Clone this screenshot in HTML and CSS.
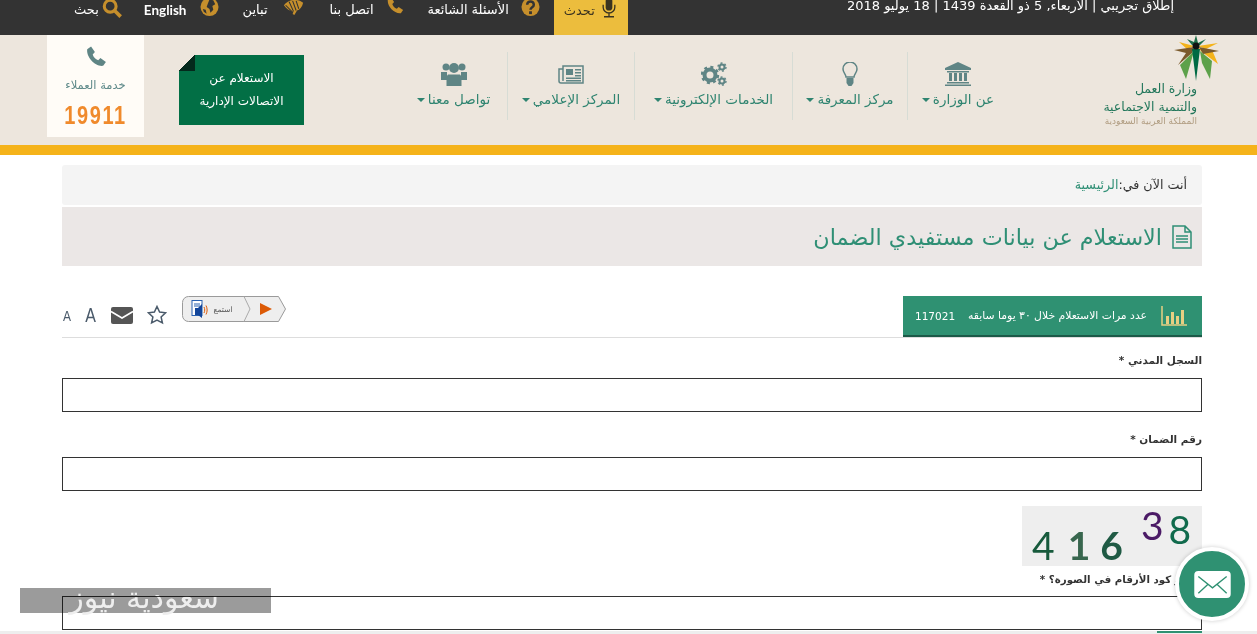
FILE: index.html
```html
<!DOCTYPE html>
<html lang="ar" dir="rtl">
<head>
    <meta charset="UTF-8">
    <title>الاستعلام عن بيانات مستفيدي الضمان</title>
    <link rel="stylesheet" href="styles.css">
</head>
<body>
    <div class="topbar">
        <div class="topbar-date">إطلاق تجريبي | الأربعاء, 5 ذو القعدة 1439 | 18 يوليو 2018</div>
        <div class="topbar-links">
            <a class="talk-link">
                <svg class="top-icon" viewBox="0 0 20 24"><path fill="#3a3320" d="M10 0a4 4 0 0 0-4 4v7a4 4 0 0 0 8 0V4a4 4 0 0 0-4-4z"/><path fill="none" stroke="#3a3320" stroke-width="1.6" d="M3 8v3a7 7 0 0 0 14 0V8M10 18v4M4 22.500h12"/></svg>
                <span>تحدث</span>
            </a>
            <a class="top-link link-faq">
                <svg class="top-icon" viewBox="0 0 20 20"><circle cx="10" cy="10" r="9.500" fill="#c68f2c"/><path fill="none" stroke="#333" stroke-width="2.600" d="M6.500 7.500c0-4.500 7-4.500 7 0 0 3-3.500 2.500-3.500 5.500"/><rect x="8.500" y="14.500" width="3" height="3" fill="#333"/></svg>
                <span>الأسئلة الشائعة</span>
            </a>
            <a class="top-link link-call">
                <svg class="top-icon raised" viewBox="0 0 20 20"><path fill="#c68f2c" d="M2 3l3.500-2.500 3.500 5-2 2.200c.8 2.500 2.500 4.300 5 5.300l2-2 5 3.500-2.500 3.500C9 19 1 10 2 3z"/></svg>
                <span>اتصل بنا</span>
            </a>
            <a class="top-link link-contrast">
                <svg class="top-icon" viewBox="0 0 24 20"><path fill="#c68f2c" d="M1 8c5-7 15-8 22-3-1 5-4 8-7 9l-3 5-2-1 1-3C8 15 4 12 1 8z"/><path fill="none" stroke="#333" stroke-width="1.200" d="M7 4l5 11M11 3l4 11M15 3l3 9M3 8l7 7"/></svg>
                <span>تباين</span>
            </a>
            <a class="top-link link-lang">
                <svg class="top-icon" viewBox="0 0 20 20"><circle cx="10" cy="10" r="9.500" fill="#c68f2c"/><path fill="#333" d="M10 2l4 1 2 4-3 2 1 4-3 3-1-4-3-2 1-3zM3 12l3 1 1 4-3-2z"/></svg>
                <span class="lang-text">English</span>
            </a>
            <a class="top-link link-search">
                <svg class="top-icon search-icon" viewBox="0 0 22 22"><circle cx="9" cy="9" r="6.500" fill="none" stroke="#c68f2c" stroke-width="3.400"/><path stroke="#c68f2c" stroke-width="4" d="M13.500 13.500l7 7"/></svg>
                <span>بحث</span>
            </a>
        </div>
    </div>

    <div class="header">
        <div class="logo">
            <svg class="logo-palm" viewBox="0 0 46 46">
                <path fill="#f4b31a" d="M24 11L44 8 32 14zM24 13l14 2 6 14-16-12zM20 11L5 7l8 7z"/>
                <path fill="#7b5a2c" d="M20 12L0 15l12 3-8 12 14-12zM25 12l20 4-16 3z"/>
                <path fill="#5da14a" d="M20 16L12 44 6 30zM26 16l12 10-2 18-8-16z"/>
                <path fill="#006a44" d="M18 14h8l-4 32z"/>
                <path fill="#1f6f4b" d="M22 0l2 8 8-4-6 6h-8l-5-6 7 3z"/>
                <circle cx="22" cy="11" r="3.500" fill="#111"/>
            </svg>
            <div class="logo-name">وزارة العمل<br>والتنمية الاجتماعية</div>
            <div class="logo-sub">المملكة العربية السعودية</div>
        </div>
        <nav class="mainnav">
            <a class="nav-item nav-ministry">
                <svg class="nav-icon" viewBox="0 0 26 24"><path fill="#5f8585" d="M13 0l13 6v2H0V6zM2 9h22v1.500H2zM4 11h3v8H4zM9 11h3v8H9zM14 11h3v8h-3zM19 11h3v8h-3zM2 20h22v1.500H2zM0 22.500h26V24H0z"/></svg>
                <span class="nav-label">عن الوزارة<i class="caret"></i></span>
            </a>
            <a class="nav-item nav-knowledge">
                <svg class="nav-icon" viewBox="0 0 26 24"><path fill="none" stroke="#5f8585" stroke-width="1.500" d="M9 15c0-3-3-4-3-8a7 7 0 0 1 14 0c0 4-3 5-3 8z"/><path fill="#5f8585" d="M9.500 16h7v5l-2 3h-3l-2-3z"/></svg>
                <span class="nav-label">مركز المعرفة<i class="caret"></i></span>
            </a>
            <a class="nav-item nav-services">
                <svg class="nav-icon" viewBox="0 0 26 24"><circle cx="9" cy="13" r="5.500" fill="none" stroke="#5f8585" stroke-width="4"/><circle cx="9" cy="13" r="8" fill="none" stroke="#5f8585" stroke-width="2.400" stroke-dasharray="3 3.300"/><circle cx="21" cy="5" r="2.500" fill="none" stroke="#5f8585" stroke-width="2"/><circle cx="21" cy="5" r="4" fill="none" stroke="#5f8585" stroke-width="1.400" stroke-dasharray="2 2.200"/><circle cx="21" cy="19" r="2.500" fill="none" stroke="#5f8585" stroke-width="2"/><circle cx="21" cy="19" r="4" fill="none" stroke="#5f8585" stroke-width="1.400" stroke-dasharray="2 2.200"/></svg>
                <span class="nav-label">الخدمات الإلكترونية<i class="caret"></i></span>
            </a>
            <a class="nav-item nav-media">
                <svg class="nav-icon" viewBox="0 0 26 24"><path fill="none" stroke="#5f8585" stroke-width="1.500" d="M5 4h20v17H3a2 2 0 0 1-2-2V7h4zM5 7v12"/><path fill="#5f8585" d="M8 7h7v6H8zM17 7h6v1.500h-6zM17 10h6v1.500h-6zM17 13h6v1.500h-6zM8 15.500h15V17H8zM8 18h15v1.500H8z"/></svg>
                <span class="nav-label">المركز الإعلامي<i class="caret"></i></span>
            </a>
            <a class="nav-item nav-contact">
                <svg class="nav-icon" viewBox="0 0 26 24"><circle cx="5" cy="5" r="3.500" fill="#5f8585"/><circle cx="21" cy="5" r="3.500" fill="#5f8585"/><circle cx="13" cy="6" r="5" fill="#5f8585"/><path fill="#5f8585" d="M0 10h6v8H0zM20 10h6v8h-6zM7 12.500h12l1.500 2V24H5.500v-9.500z"/></svg>
                <span class="nav-label">تواصل معنا<i class="caret"></i></span>
            </a>
        </nav>
        <a class="admin-box">
            <i class="admin-fold"></i>
            الاستعلام عن<br>الاتصالات الإدارية
        </a>
        <div class="service-box">
            <svg class="service-icon" viewBox="0 0 20 20"><path fill="#5f8585" d="M2 3l3.500-2.500 3.500 5-2 2.200c.8 2.500 2.500 4.300 5 5.300l2-2 5 3.500-2.500 3.500C9 19 1 10 2 3z"/></svg>
            <div class="service-label">خدمة العملاء</div>
            <div class="service-number">19911</div>
        </div>
    </div>
    <div class="stripe"></div>

    <div class="content">
        <div class="breadcrumb"><span class="crumb-lead">أنت الآن في:</span><a class="crumb-link">الرئيسية</a></div>
        <div class="page-title">
            <svg class="title-icon" viewBox="0 0 20 24"><path fill="none" stroke="#2f8f75" stroke-width="1.500" d="M1 1h12l6 6v16H1zM13 1v6h6"/><path stroke="#2f8f75" stroke-width="1.500" d="M4 11h12M4 14h12M4 17h12"/></svg>
            <h1>الاستعلام عن بيانات مستفيدي الضمان</h1>
        </div>

        <div class="tools-row">
            <div class="stats-box">
                <svg class="stats-icon" viewBox="0 0 26 20"><path fill="none" stroke="#e8cf82" stroke-width="1.500" d="M1 0v19h25"/><path fill="#e8cf82" d="M5 10h3v8H5zM10 6h3v12h-3zM15 10h3v8h-3zM20 4h3v14h-3z"/></svg>
                <span class="stats-text">عدد مرات الاستعلام خلال ٣٠ يوما سابقه</span>
                <span class="stats-count">117021</span>
            </div>
            <div class="page-tools">
                <svg class="listen" viewBox="0 0 104 26">
                    <path d="M6.500 0.500H96.500L103.500 13L96.500 25.500H6.500a6 6 0 0 1-6-6V6.500a6 6 0 0 1 6-6z" fill="#eeeeee" stroke="#9a9a9a"/>
                    <path fill="none" stroke="#aaa" d="M62 0.500l6 12.500-6 12.500"/>
                    <path fill="#dc5a06" d="M78 7l12 6-12 6z"/>
                    <rect x="10" y="4.500" width="10" height="15" fill="#fff" stroke="#2a62b0"/>
                    <path stroke="#2a62b0" d="M12 8h6M12 10h6"/>
                    <path fill="#12459a" d="M13 12h3l4-4v14l-4-3h-3z"/>
                    <path fill="none" stroke="#dc5a06" d="M22 11c1 2 1 4 0 6M24 9.500c1.500 3 1.500 6 0 9"/>
                    <text class="listen-text" x="41" y="16" text-anchor="middle">استمع</text>
                </svg>
                <svg class="star" viewBox="0 0 20 20"><path fill="none" stroke="#4a5a6a" stroke-width="1.500" d="M10 1.500l2.600 5.600 6 .7-4.500 4.100 1.300 6L10 15l-5.400 2.900 1.300-6L1.400 7.800l6-.7z"/></svg>
                <svg class="mail" viewBox="0 0 22 17"><rect width="22" height="17" rx="2" fill="#555"/><path fill="none" stroke="#fff" stroke-width="1.600" d="M0 4.500l11 6.500 11-6.500"/></svg>
                <span class="font-up">A</span>
                <span class="font-down">A</span>
            </div>
        </div>

        <form class="inquiry-form">
            <label class="field-label first-label">السجل المدني *</label>
            <div class="field-box"></div>
            <label class="field-label second-label">رقم الضمان *</label>
            <div class="field-box"></div>
            <div class="captcha" dir="ltr">
                <span class="digit digit-4">4</span>
                <span class="digit digit-1">1</span>
                <span class="digit digit-6">6</span>
                <span class="digit digit-3">3</span>
                <span class="digit digit-8">8</span>
            </div>
            <label class="field-label captcha-label">ما هو كود الأرقام في الصورة؟ *</label>
            <div class="field-box"></div>
        </form>
    </div>

    <div class="bottom-strip"><i class="bottom-mark"></i></div>

    <div class="watermark">سعودية نيوز</div>
    <a class="float-mail">
        <svg viewBox="0 0 54 40"><rect width="54" height="40" rx="6" fill="#fff"/><path fill="none" stroke="#2f9172" stroke-width="2" d="M6 8l21 17L48 8M6 33l14-13M48 33L34 20"/></svg>
    </a>
</body>
</html>
```
FILE: styles.css
```css
body, html {
    margin: 0;
    height: 634px;
    overflow: hidden;
    background: #fff;
    font-family: "DejaVu Sans", "Noto Sans", sans-serif;
    color: #333;
}

a {
    text-decoration: none;
    color: inherit;
}

/* top bar */
.topbar {
    height: 35px;
    background: #333;
    color: #fff;
    display: flex;
    justify-content: space-between;
    padding: 0 83px 0 74px;
    font-size: 13px;
}
.topbar-date {
    line-height: 11px;
    white-space: nowrap;
}
.topbar-links {
    display: flex;
    align-items: flex-start;
}
.talk-link {
    width: 74px;
    height: 35px;
    box-sizing: border-box;
    background: #ecbd3d;
    color: #3a3320;
    display: flex;
    justify-content: center;
    gap: 5px;
    line-height: 22px;
    margin-left: 14px;
}
.top-link {
    display: flex;
    gap: 11px;
    line-height: 20px;
    white-space: nowrap;
}
.top-icon {
    width: 18px;
    height: 20px;
    flex: none;
}
.talk-link .top-icon {
    margin-top: -2px;
}
.top-icon.raised {
    margin-top: -4px;
}
.link-faq { margin-left: 24px; gap: 12px; }
.link-call { margin-left: 26px; gap: 12px; }
.link-contrast { margin-left: 23px; gap: 15px; }
.link-lang { margin-left: 22px; gap: 14px; }
.link-faq .top-icon, .link-lang .top-icon {
    margin-top: -3px;
    width: 19px;
}
.link-contrast .top-icon {
    margin-top: -3px;
    width: 21px;
}
.search-icon {
    width: 20px;
    height: 20px;
    margin-top: -2px;
}
.link-search { gap: 3px; }
.lang-text {
    font-family: "Lato", sans-serif;
    font-weight: 700;
    font-size: 13.500px;
}

/* header */
.header {
    height: 110px;
    background: #ede6dd;
    display: flex;
    align-items: flex-start;
    padding-right: 37px;
}
.logo {
    width: 115px;
    flex: none;
    margin-left: 97px;
    padding-right: 23px;
    box-sizing: border-box;
    color: #21765a;
    position: relative;
    padding-top: 45px;
}
.logo-palm {
    position: absolute;
    top: 0;
    right: 0;
    width: 46px;
    height: 46px;
}
.logo-name {
    font-size: 12.500px;
    line-height: 18px;
    white-space: nowrap;
}
.logo-sub {
    font-size: 9px;
    color: #b09c80;
    white-space: nowrap;
}
.mainnav {
    display: flex;
    width: 608px;
    flex: none;
    margin-top: 17px;
    margin-left: 96px;
}
.nav-item {
    height: 68px;
    box-sizing: border-box;
    border-left: 1px solid #d7dcd5;
    display: flex;
    flex-direction: column;
    align-items: center;
    padding-top: 10px;
    color: #2f8470;
    font-size: 13.500px;
    white-space: nowrap;
}
.nav-ministry { width: 101px; }
.nav-knowledge { width: 115px; }
.nav-services { width: 158px; }
.nav-media { width: 127px; }
.nav-contact { width: 107px; border-left: 0; }
.nav-icon {
    width: 26px;
    height: 24px;
}
.nav-label {
    margin-top: 2px;
    line-height: 22px;
}
.caret {
    display: inline-block;
    border-top: 4px solid #2f8470;
    border-left: 4px solid transparent;
    border-right: 4px solid transparent;
    margin-right: 3px;
    vertical-align: middle;
}
.admin-box {
    width: 125px;
    height: 70px;
    flex: none;
    margin-top: 20px;
    background: #026f45;
    color: #fff;
    font-size: 12px;
    line-height: 23px;
    text-align: center;
    padding-top: 12px;
    box-sizing: border-box;
    position: relative;
}
.admin-fold {
    position: absolute;
    top: 0;
    left: 0;
    width: 16px;
    height: 16px;
    background: linear-gradient(135deg, #ede6dd 50%, #04291c 50%);
}
.service-box {
    width: 97px;
    height: 102px;
    flex: none;
    margin-right: 35px;
    background: #fffcf7;
    text-align: center;
    box-sizing: border-box;
    padding-top: 11px;
}
.service-icon {
    width: 22px;
    height: 22px;
    display: block;
    margin: 0 auto;
}
.service-label {
    font-size: 11.500px;
    color: #5f8a8a;
    margin-top: 10px;
}
.service-number {
    font-family: "Liberation Sans", sans-serif;
    font-weight: 700;
    font-size: 25px;
    letter-spacing: 2px;
    line-height: 30px;
    color: #f08a2c;
    margin-top: 8px;
    transform: scaleX(0.8);
}
.stripe {
    height: 10px;
    background: #f5b31a;
}

/* content */
.content {
    width: 1140px;
    margin-right: 55px;
    padding-top: 10px;
}
.breadcrumb {
    height: 40px;
    box-sizing: border-box;
    background: #f4f4f4;
    border-radius: 3px;
    padding-right: 15px;
    font-size: 12.700px;
    line-height: 39px;
    margin-bottom: 2px;
}
.crumb-link {
    color: #2f8f75;
}
.page-title {
    height: 59px;
    background: #ebe7e6;
    display: flex;
    align-items: center;
    gap: 10px;
    padding-right: 10px;
}
.page-title h1 {
    margin: 0;
    font-size: 22.300px;
    font-weight: 400;
    color: #2f8f75;
}
.title-icon {
    width: 20px;
    height: 24px;
}
.tools-row {
    margin-top: 30px;
    height: 41px;
    border-bottom: 1px solid #ddd;
    display: flex;
    justify-content: space-between;
}
.stats-box {
    width: 299px;
    height: 41px;
    box-sizing: border-box;
    background: #2f9172;
    border-bottom: 2px solid #1c5a48;
    color: #fff;
    display: flex;
    align-items: center;
    padding: 0 15px 0 12px;
    font-size: 10.800px;
    white-space: nowrap;
}
.stats-icon {
    width: 26px;
    height: 20px;
    margin-left: 14px;
    flex: none;
}
.stats-count {
    margin-right: auto;
    font-size: 10.500px;
}
.page-tools {
    display: flex;
    align-items: flex-start;
}
.listen {
    width: 104px;
    height: 26px;
}
.listen-text {
    font-size: 7.500px;
    fill: #555;
}
.star {
    width: 20px;
    height: 20px;
    margin: 9px 15px 0 14px;
}
.mail {
    width: 22px;
    height: 17px;
    margin: 11px 0 0 14px;
}
.font-up, .font-down {
    font-family: "Liberation Sans", sans-serif;
    color: #4a5a6a;
    line-height: 1;
    transform: scaleX(0.8);
}
.font-up {
    font-size: 20px;
    margin: 9px 0 0 12px;
}
.font-down {
    font-size: 15px;
    margin-top: 12px;
}

.field-label {
    display: block;
    font-size: 10.500px;
    font-weight: 700;
    line-height: 16px;
    white-space: nowrap;
}
.first-label { margin-top: 14px; margin-bottom: 10px; }
.second-label { margin-top: 19px; margin-bottom: 10px; }
.captcha-label { margin-top: 5px; margin-bottom: 9px; font-size: 10.250px; }
.field-box {
    height: 34px;
    box-sizing: border-box;
    border: 1px solid #333;
}
.captcha {
    width: 180px;
    height: 60px;
    margin-top: 15px;
    background: #eeeeee;
    display: flex;
    padding-left: 10px;
    box-sizing: border-box;
    gap: 13px;
    font-family: "Lato", sans-serif;
    font-size: 39px;
    line-height: 1;
}
.digit { display: block; }
.digit-4 { color: #175a3c; margin-top: 20px; }
.digit-1 { color: #38664e; margin-top: 20px; font-weight: 700; }
.digit-6 { color: #1f5a44; margin-top: 20px; font-weight: 700; margin-left: -3px; }
.digit-3 { color: #4b1a66; margin-top: 0; margin-left: 5px; }
.digit-8 { color: #106a4c; margin-top: 4px; margin-left: -8px; }

.bottom-strip {
    position: absolute;
    left: 0;
    right: 0;
    bottom: 0;
    height: 3px;
    background: #eeeeee;
}
.bottom-mark {
    position: absolute;
    left: 1157px;
    top: 0;
    width: 45px;
    height: 2px;
    background: #2f9172;
}

/* overlays */
.watermark {
    position: absolute;
    left: 20px;
    top: 588px;
    width: 251px;
    height: 25px;
    box-sizing: border-box;
    background: #9b9b9b;
    mix-blend-mode: multiply;
    color: #eeeeee;
    font-size: 30px;
    line-height: 20px;
    padding-right: 52px;
    white-space: nowrap;
}
.float-mail {
    position: absolute;
    left: 1175px;
    top: 547px;
    width: 74px;
    height: 74px;
    box-sizing: border-box;
    border: 4px solid #fff;
    border-radius: 50%;
    background: #2f9172;
    box-shadow: 0 0 4px rgba(0, 0, 0, 0.2);
    display: flex;
    align-items: center;
    justify-content: center;
}
.float-mail svg {
    width: 37px;
    height: 27px;
}
```
